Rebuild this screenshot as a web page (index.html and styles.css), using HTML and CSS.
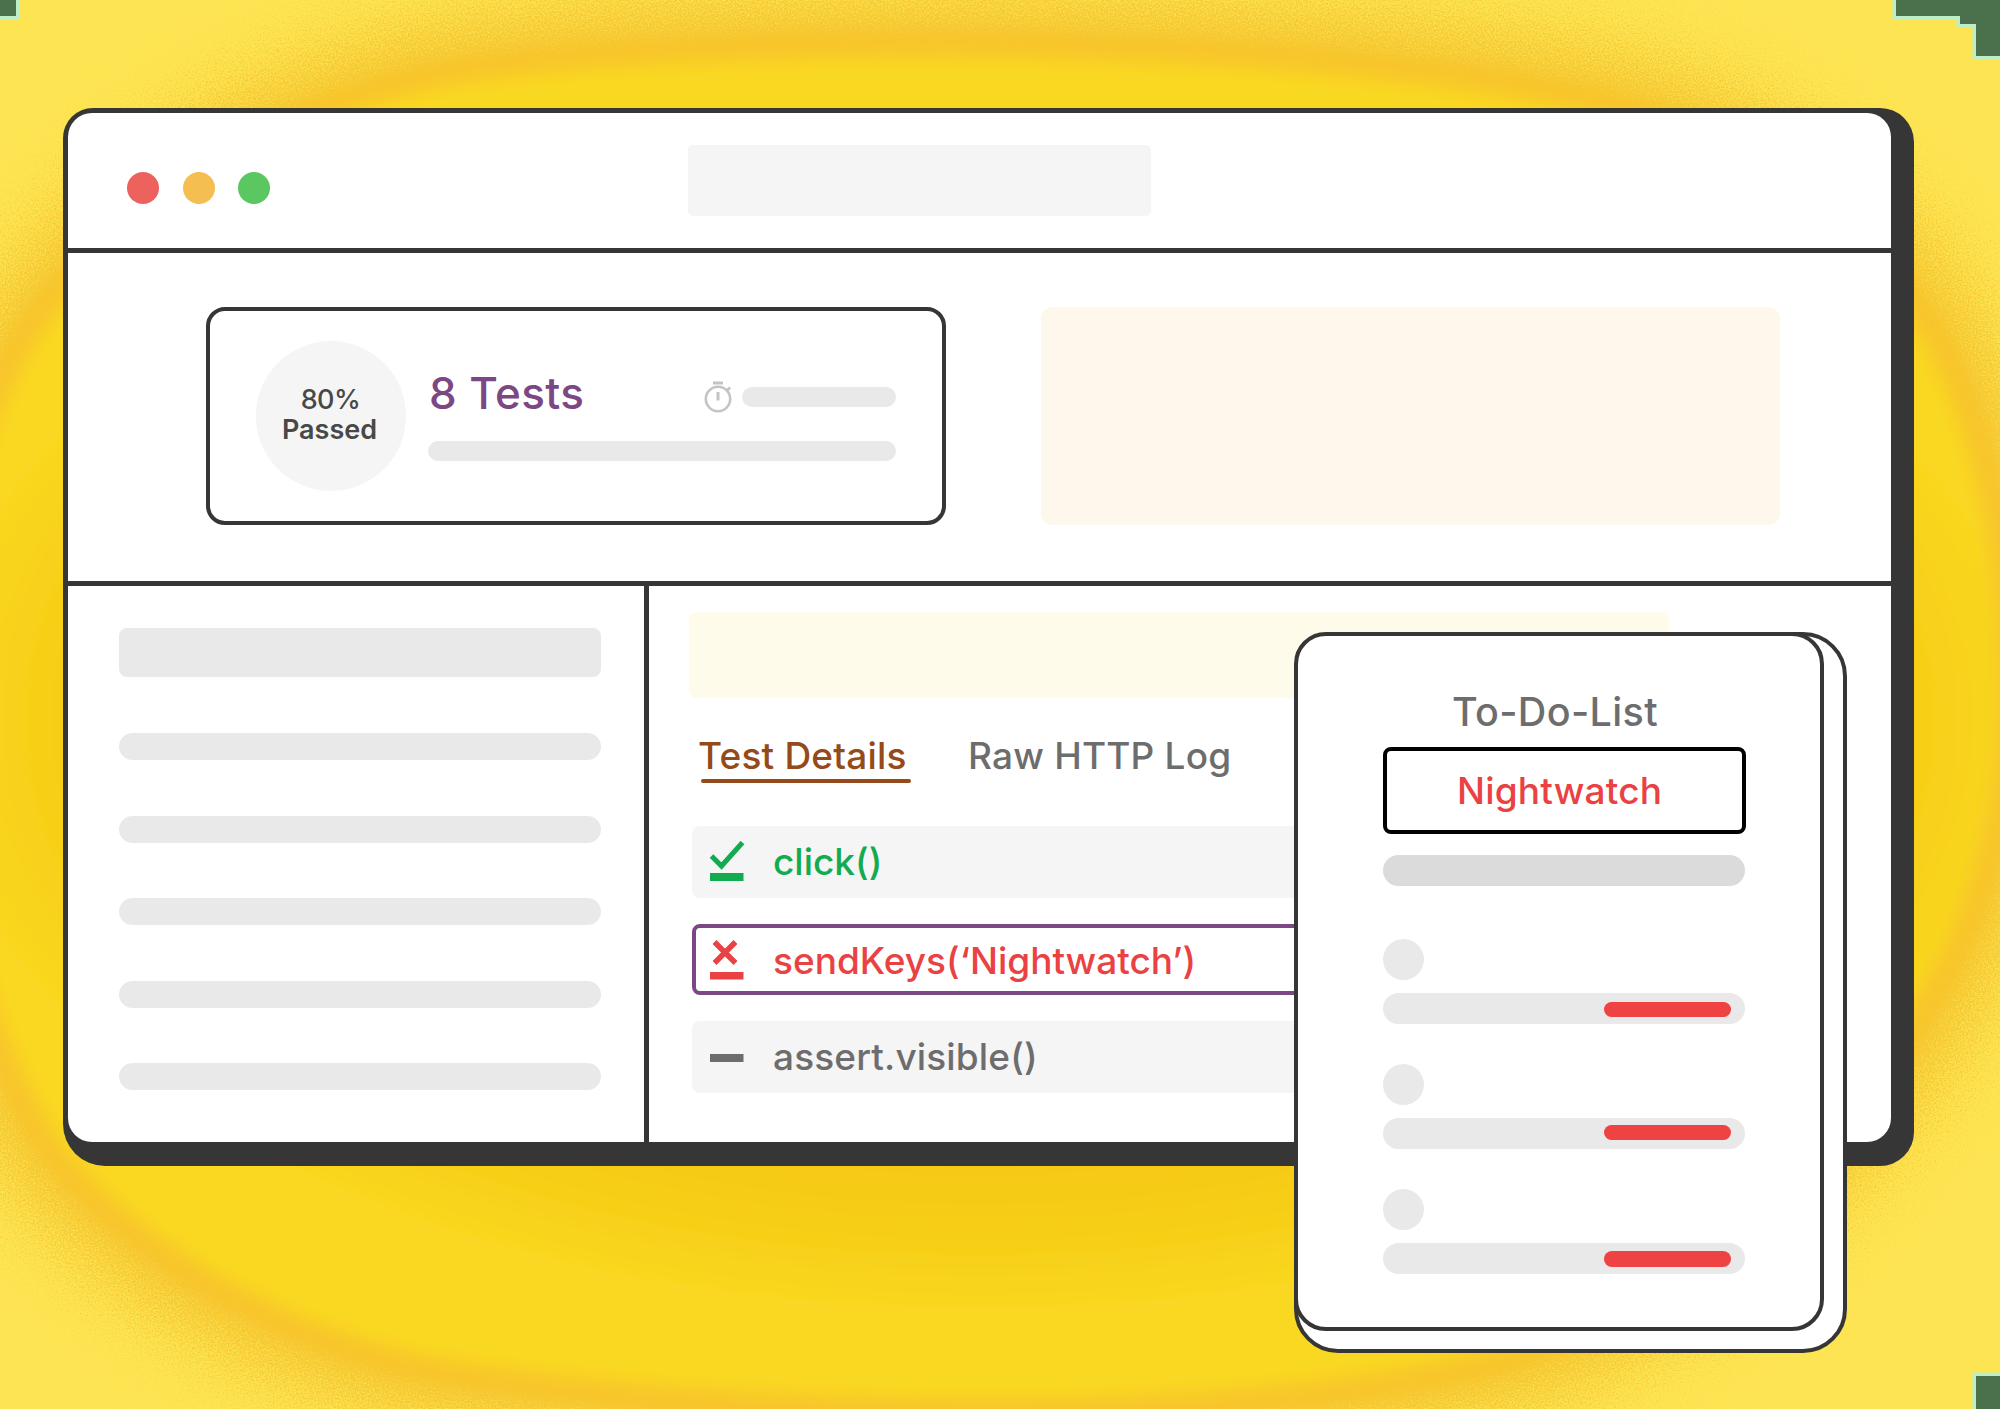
FILE: index.html
```html
<!DOCTYPE html>
<html lang="en">
<head>
<meta charset="utf-8">
<title>Test report</title>
<link rel="stylesheet" href="styles.css">
</head>
<body>
<main class="scene">
  <svg class="backdrop" viewBox="0 0 2000 1409" aria-hidden="true">
    <defs>
      <filter id="grain" x="-20%" y="-20%" width="140%" height="140%">
        <feGaussianBlur stdDeviation="30" result="halo"/>
        <feTurbulence type="fractalNoise" baseFrequency="0.6" numOctaves="2" seed="4"/>
        <feDisplacementMap in="halo" scale="170" xChannelSelector="R" yChannelSelector="G"/>
      </filter>
      <filter id="soft" x="-20%" y="-20%" width="140%" height="140%"><feGaussianBlur stdDeviation="9"/></filter>
      <radialGradient id="glow" gradientUnits="userSpaceOnUse" cx="0" cy="0" r="1" gradientTransform="translate(980 720) scale(1230 690)">
        <stop offset="0.62" stop-color="#f6c714"/>
        <stop offset="0.76" stop-color="#f7cf18"/>
        <stop offset="0.86" stop-color="#f9d820"/>
        <stop offset="1" stop-color="#f9d820"/>
      </radialGradient>
      <path id="blob" d="M1000 45C780 42 560 52 440 74C280 108 140 190 50 300C-30 400 -60 560 -60 710C-60 880 -20 1040 50 1150C130 1250 260 1330 420 1368C600 1400 800 1412 1000 1412C1200 1412 1400 1390 1520 1355C1640 1310 1730 1240 1800 1165C1930 1040 2012 880 2012 700C2012 540 1980 390 1905 290C1830 195 1720 130 1600 102C1440 66 1220 48 1000 45Z"/>
    </defs>
    <rect width="2000" height="1409" fill="#fde453"/>
    <use href="#blob" fill="#f5c832" stroke="#f5c832" stroke-width="100" filter="url(#grain)"/>
    <use href="#blob" fill="url(#glow)" stroke="#f8c52b" stroke-width="26" filter="url(#soft)"/>
    <g fill="#4a714c" stroke="#bdeec6" stroke-width="7" paint-order="stroke">
      <path d="M-8-8H16V16H-8Z"/>
      <path d="M1896-8V16H1960V24H1976V56H2008V-8Z"/>
      <path d="M1976 1376H2008V1417H1976Z"/>
    </g>
  </svg>

  <section class="frame">
    <div class="window">
      <header class="titlebar">
        <div class="lights">
          <span class="light red"></span><span class="light amber"></span><span class="light green"></span>
        </div>
        <div class="address"></div>
      </header>

      <div class="summary">
        <article class="result">
          <div class="score"><span class="percent">80%</span><br>Passed</div>
          <div class="result-info">
            <div class="result-top">
              <h1 class="count">8 Tests</h1>
              <svg class="watch" viewBox="0 0 28 32" fill="none" stroke="#c4c4c4">
                <circle cx="14" cy="18" r="12.2" stroke-width="2.6"/>
                <path d="M9 2H19M14 11V19.500" stroke-width="3"/>
                <path d="M23 9.500L26 6.500" stroke-width="3"/>
              </svg>
              <span class="bar time"></span>
            </div>
            <span class="bar progress"></span>
          </div>
        </article>
        <div class="banner"></div>
      </div>

      <div class="body">
        <aside class="list">
          <span class="list-head"></span>
          <span class="line"></span><span class="line"></span><span class="line"></span><span class="line"></span><span class="line"></span>
        </aside>
        <section class="details">
          <div class="notice"></div>
          <nav class="tabs">
            <span class="tab active">Test Details</span>
            <span class="tab log">Raw HTTP Log</span>
          </nav>
          <div class="steps">
            <div class="step pass">
              <svg class="mark" viewBox="0 0 36 42"><path d="M2.500 15L12.500 25L33.500 1.500" fill="none" stroke="currentColor" stroke-width="5"/><path d="M1 32H34.500V40H1Z" fill="currentColor"/></svg>
              <span class="cmd">click()</span>
            </div>
            <div class="step fail">
              <svg class="mark" viewBox="0 0 36 42"><path d="M5.500 4L26.500 25M26.500 4L5.500 25" fill="none" stroke="currentColor" stroke-width="5.500"/><path d="M1 34H34.500V41.500H1Z" fill="currentColor"/></svg>
              <span class="cmd">sendKeys(‘Nightwatch’)</span>
            </div>
            <div class="step skip">
              <svg class="mark" viewBox="0 0 36 42"><path d="M1 18H34.500V26H1Z" fill="currentColor"/></svg>
              <span class="cmd">assert.visible()</span>
            </div>
          </div>
        </section>
      </div>
    </div>
  </section>

  <section class="todo-back">
    <div class="todo">
      <h2 class="todo-title">To-Do-List</h2>
      <div class="entry"><span class="entry-text">Nightwatch</span></div>
      <span class="slot"></span>
      <div class="item"><span class="avatar"></span><span class="track"><span class="fill"></span></span></div>
      <div class="item"><span class="avatar"></span><span class="track raised"><span class="fill"></span></span></div>
      <div class="item"><span class="avatar"></span><span class="track"><span class="fill"></span></span></div>
    </div>
  </section>
</main>
</body>
</html>
```

FILE: styles.css
```css
* { box-sizing: border-box; }

body {
  margin: 0;
  font-family: Inter, "Liberation Sans", sans-serif;
}

.scene {
  position: relative;
  width: 2000px;
  height: 1409px;
  padding: 108px 86px 0 63px;
  overflow: hidden;
  background: #fde453;
}

.backdrop { position: absolute; inset: 0; width: 2000px; height: 1409px; }

.frame {
  position: relative;
  width: 1851px;
  height: 1058px;
  padding: 5px 23px 24px 5px;
  border-radius: 30px 34px 34px 42px;
  background: #363636;
}

.window {
  display: flex;
  flex-direction: column;
  height: 1029px;
  border-radius: 24px;
  background: #fff;
  overflow: hidden;
}

.titlebar {
  display: flex;
  flex: none;
  height: 140px;
  padding: 32px 0 0 59px;
  border-bottom: 5px solid #363636;
}

.lights { display: flex; gap: 23.5px; width: 561px; padding-top: 27px; }
.light { width: 32px; height: 32px; border-radius: 50%; }
.red { background: #ed625d; }
.amber { background: #f4be50; }
.green { background: #5bc760; }
.address { width: 463px; height: 71px; border-radius: 5px; background: #f5f5f5; }

.summary {
  display: flex;
  flex: none;
  gap: 95px;
  height: 333px;
  padding: 54px 0 0 138px;
  border-bottom: 5px solid #363636;
}

.result {
  display: flex;
  gap: 22px;
  width: 740px;
  height: 218px;
  padding: 30px 0 0 46px;
  border: 4px solid #363636;
  border-radius: 19px;
}

.score {
  width: 150px;
  height: 150px;
  padding: 44px 3px 0 0;
  border-radius: 50%;
  background: #f5f5f5;
  color: #484848;
  font-size: 27px;
  font-weight: 600;
  line-height: 30px;
  text-align: center;
}
.percent { padding-left: 2px; font-weight: 500; letter-spacing: -0.500px; }

.result-info { width: 469px; }
.result-top { display: flex; height: 100px; }
.count {
  width: 275px;
  margin: 25px 0 0 1px;
  color: #7c4785;
  font-size: 44px;
  font-weight: 500;
  line-height: 54px;
  letter-spacing: 0.400px;
}
.watch { width: 28px; height: 32px; margin-top: 40px; flex: none; }
.bar { display: block; border-radius: 10px; background: #e9e9e9; }
.time { width: 154px; height: 20px; margin: 46px 0 0 10px; }
.progress { width: 468px; height: 20px; }
.banner { width: 739px; height: 218px; border-radius: 12px; background: #fef7ec; }

.body { display: flex; flex: 1; min-height: 0; }

.list {
  display: flex;
  flex-direction: column;
  width: 581px;
  padding: 42px 0 0 51px;
  border-right: 5px solid #363636;
}
.list-head { flex: none; width: 482px; height: 49px; margin-bottom: 56px; border-radius: 8px; background: #e9e9e9; }
.line { flex: none; width: 482px; height: 27px; margin-bottom: 55.600px; border-radius: 14px; background: #e9e9e9; }
.line:last-child { margin-bottom: 0; }

.details { flex: 1; padding: 26px 0 0 40px; }
.notice { width: 980px; height: 86px; border-radius: 8px; background: #fefbeb; }

.tabs {
  display: flex;
  height: 128px;
  padding: 36px 0 0 9px;
  font-size: 37px;
  font-weight: 500;
  line-height: 44px;
}
.tab { height: 50px; letter-spacing: 0.200px; white-space: nowrap; }
.active { width: 270px; color: #944a1a; }
.active::after {
  content: "";
  display: block;
  width: 210px;
  height: 4.500px;
  margin: 0.500px 0 0 3px;
  border-radius: 3px;
  background: #944a1a;
}
.log { color: #6d6d6d; }

.steps { display: flex; flex-direction: column; gap: 26px; padding-left: 3px; }
.step {
  display: flex;
  align-items: center;
  width: 980px;
  height: 71.500px;
  padding-left: 17px;
  border-radius: 8px;
  background: #f5f5f5;
  font-size: 37px;
  font-weight: 500;
  line-height: 44px;
}
.mark { width: 36px; height: 42px; flex: none; }
.cmd { margin-left: 28px; padding-top: 1px; white-space: nowrap; }
.pass { color: #13ab50; }
.fail { padding-left: 13px; border: 4.500px solid #7c4785; background: #fff; color: #ea4243; }
.fail .cmd { padding-top: 3px; }
.skip { color: #6d6d6d; letter-spacing: 0.150px; }

.todo-back {
  position: absolute;
  left: 1294px;
  top: 632px;
  width: 553px;
  height: 721px;
  border: 4px solid #363636;
  border-radius: 44px;
  background: #fff;
}

.todo {
  width: 530px;
  height: 699px;
  margin: -4px 0 0 -4px;
  padding: 54px 0 0 85px;
  border: 4px solid #363636;
  border-radius: 32px;
  background: #fff;
}

.todo-title {
  margin: 0 0 13px 69px;
  color: #6d6d6d;
  font-size: 39.500px;
  font-weight: 500;
  line-height: 44px;
  letter-spacing: 0.350px;
}
.entry {
  width: 363px;
  height: 87px;
  padding: 18px 0 0 70px;
  border: 4px solid #000;
  border-radius: 8px;
  color: #ea4243;
  font-size: 37px;
  font-weight: 500;
  line-height: 44px;
  letter-spacing: 0.200px;
}
.slot { display: block; width: 362px; height: 31px; margin: 21px 0 53px; border-radius: 16px; background: #dbdbdb; }
.item { height: 124.800px; }
.avatar { display: block; width: 41px; height: 41px; border-radius: 50%; background: #e9e9e9; }
.track {
  display: flex;
  justify-content: flex-end;
  width: 362px;
  height: 31px;
  margin-top: 13px;
  padding: 8.500px 14px 0 0;
  border-radius: 16px;
  background: #e9e9e9;
}
.raised { padding-top: 7px; }
.fill { width: 127px; height: 15.500px; border-radius: 8px; background: #ef4243; }
```
